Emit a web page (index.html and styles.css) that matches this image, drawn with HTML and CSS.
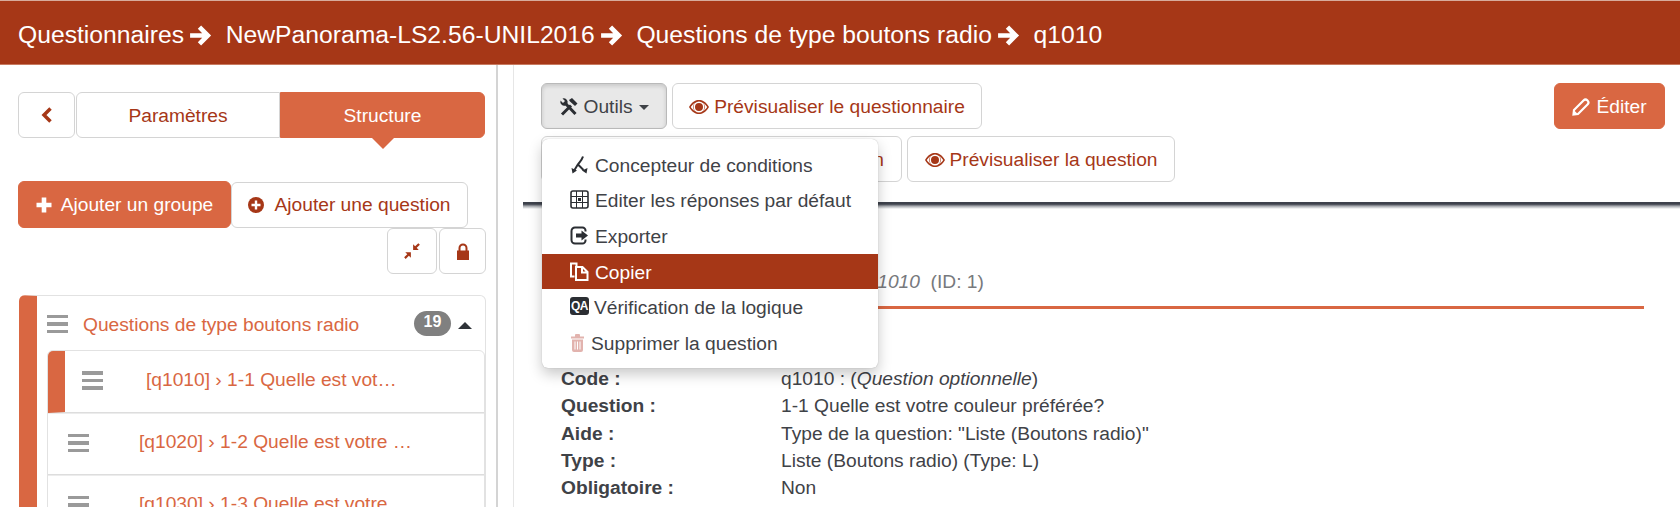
FILE: index.html
```html
<!DOCTYPE html>
<html lang="fr">
<head>
<meta charset="utf-8">
<title>q1010</title>
<link rel="stylesheet" href="styles.css">
</head>
<body>
<header class="topbar">
  <span>Questionnaires</span>
  <svg class="arrow" viewBox="0 0 24 24"><path d="M2 12H19M11 4l8 8-8 8"/></svg>
  <span>NewPanorama-LS2.56-UNIL2016</span>
  <svg class="arrow" viewBox="0 0 24 24"><path d="M2 12H19M11 4l8 8-8 8"/></svg>
  <span>Questions de type boutons radio</span>
  <svg class="arrow" viewBox="0 0 24 24"><path d="M2 12H19M11 4l8 8-8 8"/></svg>
  <span>q1010</span>
</header>
<div class="layout">
  <aside class="sidebar">
    <div class="tabs">
      <button class="btn tab-back"><svg class="ico-chev" viewBox="0 0 12 18"><path d="M9.500 2.500L3 9l6.500 6.500"/></svg></button>
      <button class="btn tab">Paramètres</button>
      <button class="btn tab tab-active">Structure</button>
    </div>
    <div class="adds">
      <button class="btn btn-primary add-group"><svg class="ico" viewBox="0 0 16 16"><path class="fill-cur" d="M5.700 .5h4.600v5.200h5.200v4.600h-5.200v5.200H5.700v-5.200H.5V5.700h5.200z"/></svg>Ajouter un groupe</button>
      <button class="btn add-question"><svg class="ico" viewBox="0 0 16 16"><circle class="fill-cur" cx="8" cy="8" r="8"/><path class="fill-white" d="M6.800 3.500h2.400v3.300h3.300v2.400H9.200v3.300H6.800V9.200H3.500V6.800h3.300z"/></svg>Ajouter une question</button>
    </div>
    <div class="tools">
      <button class="btn tool-compress"><svg class="ico-compress" viewBox="0 0 16 16"><path class="fill-cur" d="M9 2v5h5l-1.800-1.800L15 2.400 13.600 1l-2.800 2.800zM7 9H2l1.800 1.800L1 13.600 2.400 15l2.800-2.800L7 14z"/></svg></button>
      <button class="btn tool-lock"><svg class="ico-lock" viewBox="0 0 12 17"><path class="fill-cur" d="M0 7.500h1.500V5a4.500 4.500 0 0 1 9 0v2.500H12V17H0zM3.500 7.500h5V5a2.500 2.500 0 0 0-5 0z"/></svg></button>
    </div>
    <section class="group">
      <div class="group-head">
        <span class="bars"><i></i><i></i><i></i></span>
        <span class="group-title">Questions de type boutons radio</span>
        <span class="badge">19</span>
        <span class="caret-up"></span>
      </div>
      <ul class="qlist">
        <li class="qitem qitem-active"><span class="bars"><i></i><i></i><i></i></span><span class="qtext">[q1010] › 1-1 Quelle est vot…</span></li>
        <li class="qitem"><span class="bars"><i></i><i></i><i></i></span><span class="qtext">[q1020] › 1-2 Quelle est votre …</span></li>
        <li class="qitem"><span class="bars"><i></i><i></i><i></i></span><span class="qtext">[q1030] › 1-3 Quelle est votre</span></li>
      </ul>
    </section>
  </aside>
  <div class="gutter"></div>
  <main class="main">
    <div class="toolbar">
      <div class="toolbar-left">
        <div class="toolbar-row">
          <div class="outils-wrap">
            <button class="btn btn-open"><svg class="ico-tools" viewBox="0 0 20 20"><path d="M3 17.500L12 8.500M6 6L16.500 17"/><path class="tools-head" d="M1.500 3.500L4 6l2-2-2.500-2.500A4 4 0 0 1 8.500 6.500L6.500 8.500A4 4 0 0 1 1.500 3.500zM10 3l3-2 5.500 5.500L16 9l-5-4.500z"/></svg> Outils <span class="caret"></span></button>
            <ul class="menu">
              <li class="menu-item"><svg class="mi" viewBox="0 0 19 19"><path class="m-line" d="M13 1.500C12 5 9.500 7 7.500 10L4.500 15M8 9.500L13.500 15"/><path class="m-fill" d="M1.500 13l5.500 2.500-4.500 3zM17.500 13l-5.500 2.500 4.500 3z"/></svg>Concepteur de conditions</li>
              <li class="menu-item"><svg class="mi" viewBox="0 0 19 19"><rect class="m-outline" x="1" y="1" width="17" height="17" rx="2"/><path class="m-thin" d="M1 6.500h17M1 12.500h17M6.500 1v17M12.500 1v17"/><rect class="m-fill" x="8" y="8" width="3" height="3"/></svg>Editer les réponses par défaut</li>
              <li class="menu-item"><svg class="mi" viewBox="0 0 19 19"><path class="m-outline m-thick" d="M15.500 5.500V4.500a3 3 0 0 0-3-3H5A3.500 3.500 0 0 0 1.500 5v9A3.500 3.500 0 0 0 5 17.500h7.500a3 3 0 0 0 3-3v-1"/><path class="m-fill" d="M6 7.500h5.500V4.500l6.500 5-6.500 5v-3H6z"/></svg>Exporter</li>
              <li class="menu-item menu-item-active"><svg class="mi" viewBox="0 0 19 19"><path class="m-white" d="M6.500 4V1.500H1v13h3.500M6 5h6.500L17.500 10v8H6zM12 5v5.500h5.500"/></svg>Copier</li>
              <li class="menu-item"><span class="qa">QA</span>Vérification de la logique</li>
              <li class="menu-item menu-item-danger"><svg class="mi mi-trash" viewBox="0 0 15 19"><path class="m-pink" d="M1 3.500h13v2H1zM5 3.500V2a1 1 0 0 1 1-1h3a1 1 0 0 1 1 1v1.500zM2 6.500h11V17a2 2 0 0 1-2 2H4a2 2 0 0 1-2-2z"/><path class="m-slit" d="M5 8.500v8M7.500 8.500v8M10 8.500v8"/></svg>Supprimer la question</li>
            </ul>
          </div>
          <button class="btn btn-outline btn-survey-prev"><svg class="ico-eye" viewBox="0 0 20 14"><path class="fill-cur" d="M0 7C3.500 1.500 6.500 0 10 0s6.500 1.500 10 7c-3.500 5.500-6.500 7-10 7S3.500 12.500 0 7zm10-5.500a5.500 5.500 0 1 0 0 11 5.500 5.500 0 0 0 0-11zM1.800 7c1.300 2 2.800 3.400 4.200 4.300A5.500 5.500 0 0 1 6 2.700C4.600 3.600 3.100 5 1.800 7zM14 2.700a5.500 5.500 0 0 1 0 8.600c1.400-.9 2.900-2.300 4.200-4.300-1.300-2-2.800-3.400-4.200-4.300zM10 3a4 4 0 1 1 0 8 4 4 0 0 1 0-8z"/></svg> Prévisualiser le questionnaire</button>
        </div>
        <div class="toolbar-row">
          <button class="btn btn-outline btn-group-prev"><svg class="ico-eye" viewBox="0 0 20 14"><path class="fill-cur" d="M0 7C3.500 1.500 6.500 0 10 0s6.500 1.500 10 7c-3.500 5.500-6.500 7-10 7S3.500 12.500 0 7zM10 3a4 4 0 1 0 0 8 4 4 0 0 0 0-8z"/></svg> Prévisualiser le groupe de question</button>
          <button class="btn btn-outline btn-question-prev"><svg class="ico-eye" viewBox="0 0 20 14"><path class="fill-cur" d="M0 7C3.500 1.500 6.500 0 10 0s6.500 1.500 10 7c-3.500 5.500-6.500 7-10 7S3.500 12.500 0 7zm10-5.500a5.500 5.500 0 1 0 0 11 5.500 5.500 0 0 0 0-11zM1.800 7c1.300 2 2.800 3.400 4.200 4.300A5.500 5.500 0 0 1 6 2.700C4.600 3.600 3.100 5 1.800 7zM14 2.700a5.500 5.500 0 0 1 0 8.600c1.400-.9 2.900-2.300 4.200-4.300-1.300-2-2.800-3.400-4.200-4.300zM10 3a4 4 0 1 1 0 8 4 4 0 0 1 0-8z"/></svg> Prévisualiser la question</button>
        </div>
      </div>
      <button class="btn btn-primary btn-edit"><svg class="ico-pencil" viewBox="0 0 18 18"><path d="M2 12L11.500 2.500a2.800 2.800 0 0 1 4 4L6 16l-4.500.5z"/><path class="pencil-tip" d="M1.500 16.500l.7-4 3.300 3.300z"/></svg> Éditer</button>
    </div>
    <div class="content">
      <h2 class="summary">Résumé de la question <em>q1010</em>&nbsp; (ID: 1)</h2>
      <dl class="details">
        <dt>Code :</dt><dd>q1010 : (<em>Question optionnelle</em>)</dd>
        <dt>Question :</dt><dd>1-1 Quelle est votre couleur préférée?</dd>
        <dt>Aide :</dt><dd>Type de la question: "Liste (Boutons radio)"</dd>
        <dt>Type :</dt><dd>Liste (Boutons radio) (Type: L)</dd>
        <dt>Obligatoire :</dt><dd>Non</dd>
      </dl>
    </div>
  </main>
</div>
</body>
</html>
```
FILE: styles.css
```css
* { box-sizing: border-box; }
html, body { margin: 0; height: 507px; overflow: hidden; background: #fff; }
body { font-family: "Liberation Sans", Arial, sans-serif; font-size: 19.200px; color: #3f4247; }
ul { list-style: none; margin: 0; padding: 0; }

.topbar {
  height: 65px; padding: 5px 18px 0; display: flex; align-items: center;
  background: #a63717; color: #fff; font-size: 24.700px;
  border-top: 1px solid #d7ab9c; border-bottom: 1px solid #c87a60;
}
.arrow { width: 25px; height: 25px; margin: 0 12.600px 0 4px; flex: none; }
.arrow path { fill: none; stroke: #fff; stroke-width: 4.500; stroke-linejoin: miter; }

.layout { display: flex; height: 442px; }
.sidebar { width: 498px; flex: none; padding: 27px 11px 0 18px; border-right: 2px solid #d4d4d4; overflow: hidden; }
.gutter { width: 16px; flex: none; border-right: 1px solid #e6e6e6; }
.main { flex: 1; min-width: 0; }

.btn {
  font: inherit; height: 46px; padding: 0 17px; background: #fff; color: #a63717;
  border: 1px solid #d4d4d4; border-radius: 6px; display: inline-flex; align-items: center; justify-content: center; white-space: nowrap;
}
.btn-primary { background: #d96742; border-color: #d96742; color: #fff; }
.fill-cur { fill: currentColor; }
.fill-white { fill: #fff; }
.ico { width: 16px; height: 16px; flex: none; }
.ico-compress { width: 18px; height: 18px; }
.ico-lock { width: 12px; height: 17px; }

.tabs { display: flex; gap: 1px; width: 467px; height: 46px; }
.tab-back { width: 57px; padding: 0; }
.ico-chev { width: 12px; height: 18px; }
.ico-chev path { fill: none; stroke: currentColor; stroke-width: 3.500; }
.tab { width: 204px; padding: 2px 0 0; border-radius: 6px 0 0 6px; }
.tab-active { position: relative; width: 205px; margin-left: -1px; background: #d96742; border-color: #d96742; color: #fff; border-radius: 0 6px 6px 0; }
.tab-active::after {
  content: ""; position: absolute; left: 50%; bottom: -12px; margin-left: -11px;
  border-left: 11px solid transparent; border-right: 11px solid transparent; border-top: 11px solid #d96742;
}

.adds { display: flex; margin-top: 43px; }
.add-group { width: 213px; height: 47px; padding: 0; gap: 9px; }
.add-question { width: 237px; padding: 0; gap: 10px; margin-top: 1px; }
.tools { display: flex; justify-content: flex-end; gap: 2px; width: 468px; }
.tool-compress { width: 50px; padding: 0; }
.tool-lock { width: 47px; padding: 0; }

.group { margin: 21px 0 0 1px; width: 467px; border: 1px solid #e2e2e2; border-left: 18px solid #d96742; border-radius: 6px 6px 0 0; }
.group-head { display: flex; align-items: center; height: 54px; padding: 0 13px 0 10px; }
.bars { display: flex; flex-direction: column; gap: 4px; width: 21px; flex: none; }
.group-head .bars { margin-top: 2px; }
.bars i { display: block; height: 3.500px; background: #9a9a9a; }
.group-title { color: #d96742; margin: 4px 0 0 15px; flex: 1; white-space: nowrap; }
.badge { width: 37px; height: 25px; border-radius: 13px; background: #808080; color: #fff; font-weight: 700; font-size: 16px; display: flex; align-items: center; justify-content: center; padding-bottom: 2px; }
.caret-up { margin: 5px 0 0 7px; border-left: 7px solid transparent; border-right: 7px solid transparent; border-bottom: 7px solid #2f3338; }

.qlist { margin-left: 10px; border: 1px solid #e2e2e2; border-radius: 6px 6px 0 0; overflow: hidden; }
.qitem { display: flex; align-items: center; height: 62px; padding-left: 20px; border-bottom: 1px solid #ddd; color: #d96742; white-space: nowrap; }
.qitem .bars { margin-top: -2px; }
.qitem + .qitem { height: 62px; border-top: 1px solid #ececec; }
.qtext { margin-left: 50px; margin-top: -4px; }
.qitem-active { border-left: 17px solid #d96742; padding-left: 17px; }
.qitem-active .qtext { margin-left: 43px; }

.toolbar { margin-left: 9px; height: 137px; padding: 18px 15px 0 18px; display: flex; justify-content: space-between; align-items: flex-start; background: #fff; position: relative; }
.toolbar::after { content: ""; position: absolute; left: 0; right: 0; bottom: -7px; height: 7px; background: linear-gradient(#3e424c 0, #3e424c 30%, #a8abb0 60%, rgba(255,255,255,0) 100%); }
.toolbar-left { display: flex; flex-direction: column; gap: 7px; }
.toolbar-row { display: flex; gap: 5px; }
.outils-wrap { position: relative; width: 126px; }
.btn-open { width: 126px; padding: 2px 0 0; background: #e8e8e8; border-color: #b9b9b9; color: #3f4247; box-shadow: inset 0 2px 4px rgba(0,0,0,.14); gap: 4px; }
.ico-tools { width: 20px; height: 20px; }
.ico-tools path { fill: none; stroke: #2b2e33; stroke-width: 3; }
.ico-tools .tools-head { fill: #2b2e33; stroke: none; }
.caret { border-left: 5.500px solid transparent; border-right: 5.500px solid transparent; border-top: 5.500px solid #3f4247; margin-left: 2px; }
.btn-outline { gap: 5px; padding: 2px 0 0; }
.btn-survey-prev { width: 310px; }
.btn-group-prev { width: 361px; }
.btn-question-prev { width: 268px; }
.ico-eye { width: 20px; height: 14px; }
.btn-edit { width: 111px; padding: 2px 0 0; gap: 6px; }
.ico-pencil { width: 18px; height: 18px; }
.ico-pencil path { fill: none; stroke: #fff; stroke-width: 2.200; }
.ico-pencil .pencil-tip { fill: #fff; stroke: none; }

.menu { position: absolute; z-index: 5; top: 56px; left: 1px; width: 336px; padding: 8px 0 7px; background: #fff; border-radius: 6px; box-shadow: 0 6px 14px rgba(0,0,0,.22), 0 0 1px rgba(0,0,0,.3); }
.menu-item { display: flex; align-items: center; height: 35.600px; padding: 2px 0 0 28px; color: #3f4247; white-space: nowrap; }
.menu-item-active { background: #a63717; color: #fff; }
.mi { width: 19px; height: 19px; margin-right: 6px; flex: none; margin-top: -3px; }
.mi-trash { width: 15px; margin-right: 6px; }
.m-line { fill: none; stroke: #2b2e33; stroke-width: 2; }
.m-fill { fill: #2b2e33; }
.m-outline { fill: none; stroke: #2b2e33; stroke-width: 1.600; }
.m-thick { stroke-width: 2; }
.m-thin { fill: none; stroke: #2b2e33; stroke-width: 1; }
.m-white { fill: none; stroke: #fff; stroke-width: 2; }
.m-pink { fill: #e2b3ae; }
.m-slit { fill: none; stroke: #fff; stroke-width: 1; }
.qa { width: 19px; height: 18px; margin-right: 5px; margin-top: -5px; background: #2b2e33; color: #fff; border-radius: 3px; font-size: 12px; font-weight: 700; display: flex; align-items: center; justify-content: center; flex: none; letter-spacing: -.5px; }

.content { padding: 0 36px 0 47px; }
.summary { font: 400 19.200px/26px "Liberation Sans", Arial, sans-serif; color: #77797d; margin: 67px 0 0; height: 40px; border-bottom: 3px solid #d96742; padding-left: 104px; white-space: nowrap; }
.details { display: grid; grid-template-columns: 220px 1fr; grid-auto-rows: 27.300px; margin: 56.500px 0 0; align-items: center; font-size: 19.200px; }
.details dt { font-weight: 700; }
.details dd { margin: 0; }
```
